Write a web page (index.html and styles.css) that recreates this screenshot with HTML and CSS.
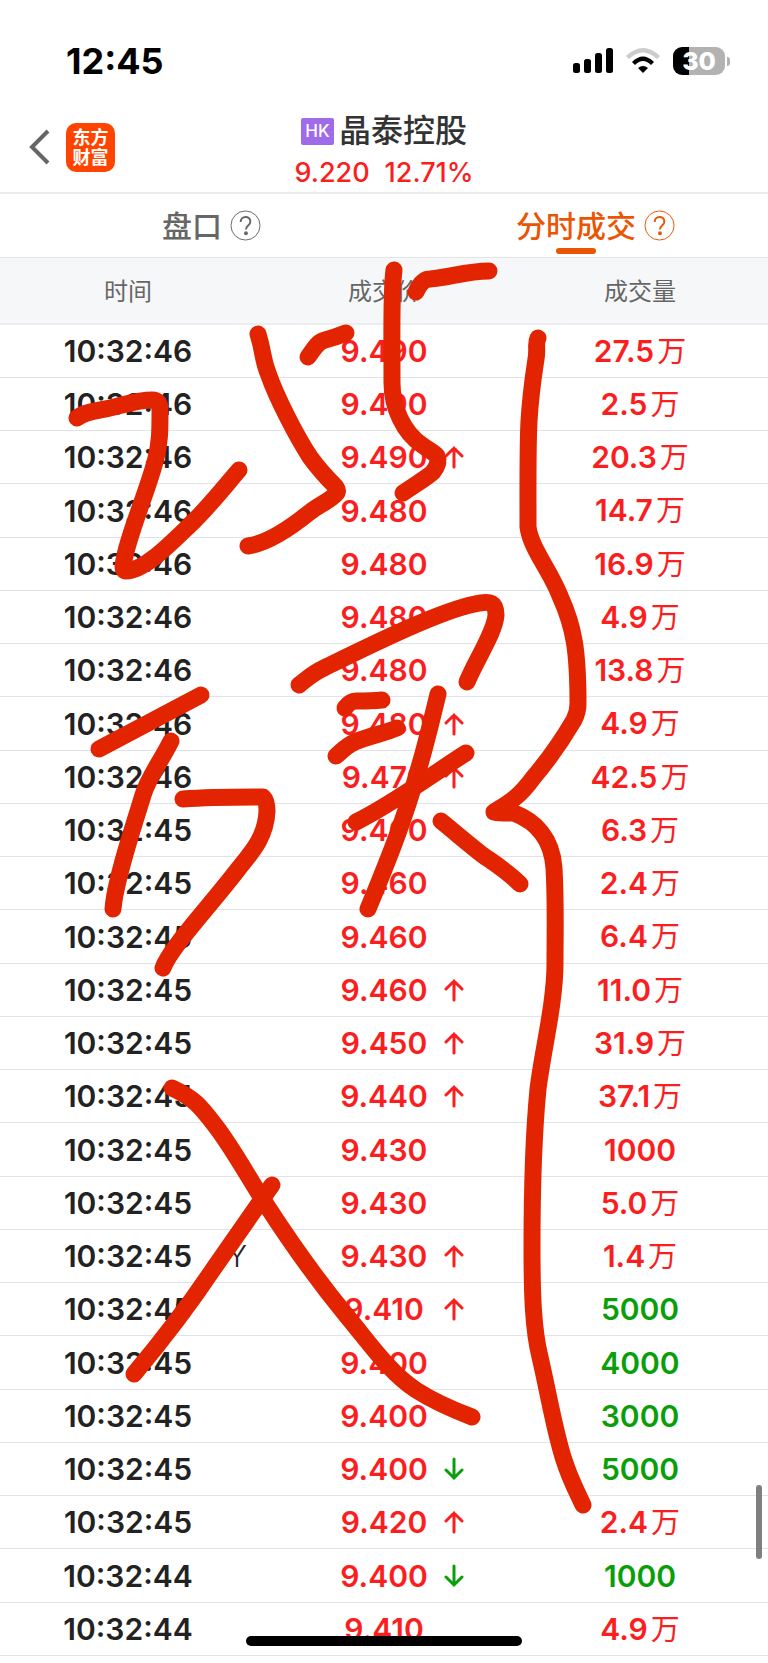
FILE: index.html
```html
<!DOCTYPE html>
<html lang="zh-CN">
  <head>
    <meta charset="utf-8">
    <meta name="viewport" content="width=device-width, initial-scale=1">
    <title>晶泰控股 分时成交</title>
    <link rel="stylesheet" href="styles.css">
  </head>
  <body>
    <svg class="defs" aria-hidden="true">
      <symbol id="up" viewBox="0 0 20 24">
        <path d="M10 22V3M2 11l8-8 8 8"/>
      </symbol>
      <symbol id="down" viewBox="0 0 20 24">
        <path d="M10 2v19M2 13l8 8 8-8"/>
      </symbol>
    </svg>

    <div class="status">
      <span class="clock">12:45</span>
      <div class="indicators">
        <svg width="40" height="26" viewBox="0 0 40 26">
          <rect x="0" y="15" width="7" height="10" rx="2.500"/>
          <rect x="11" y="11" width="7" height="14" rx="2.500"/>
          <rect x="22" y="5" width="7" height="20" rx="2.500"/>
          <rect x="33" y="0" width="7" height="25" rx="2.500"/>
        </svg>
        <svg width="34" height="26" viewBox="0 0 34 26">
          <path d="M0 8Q17-8 34 8L31 11Q17-2 3 11Z" fill="#ccc"/>
          <path d="M6 14Q17 3 28 14L25 17Q17 9 9 17Z"/>
          <path d="M12 20Q17 16 22 20L17 25Z"/>
        </svg>
        <div class="battery"><span>30</span></div>
      </div>
    </div>

    <header class="nav">
      <div class="nav-left">
        <a class="back" href="#" aria-label="返回">
          <svg width="22" height="38" viewBox="0 0 22 38"><path d="M19 3L3 19l16 16"/></svg>
        </a>
        <a class="logo" href="#">东方<br>财富</a>
      </div>
      <div class="stock">
        <h1><span class="market">HK</span>晶泰控股</h1>
        <p class="quote"><span>9.220</span><span>12.71%</span></p>
      </div>
    </header>

    <nav class="tabs">
      <a class="tab" href="#">
        <span class="tab-name">盘口</span>
        <svg class="help" viewBox="0 0 32 32"><circle cx="16" cy="16" r="15"/><path d="M11 12.500c0-7 10-7 10-.5 0 4-4.500 4-4.500 8"/><circle class="dot" cx="16.500" cy="24" r="2"/></svg>
      </a>
      <a class="tab active" href="#">
        <span class="tab-name">分时成交</span>
        <svg class="help" viewBox="0 0 32 32"><circle cx="16" cy="16" r="15"/><path d="M11 12.500c0-7 10-7 10-.5 0 4-4.500 4-4.500 8"/><circle class="dot" cx="16.500" cy="24" r="2"/></svg>
      </a>
    </nav>

    <table class="ticks">
      <thead>
        <tr><th>时间</th><th>成交价</th><th>成交量</th></tr>
      </thead>
      <tbody>
        <tr><td>10:32:46</td><td class="rise">9.490</td><td class="rise">27.5<i>万</i></td></tr>
        <tr><td>10:32:46</td><td class="rise">9.490</td><td class="rise">2.5<i>万</i></td></tr>
        <tr><td>10:32:46</td><td class="rise"><div class="cell"><span>9.490</span><svg class="arrow"><use href="#up"/></svg></div></td><td class="rise">20.3<i>万</i></td></tr>
        <tr><td>10:32:46</td><td class="rise">9.480</td><td class="rise">14.7<i>万</i></td></tr>
        <tr><td>10:32:46</td><td class="rise">9.480</td><td class="rise">16.9<i>万</i></td></tr>
        <tr><td>10:32:46</td><td class="rise">9.480</td><td class="rise">4.9<i>万</i></td></tr>
        <tr><td>10:32:46</td><td class="rise">9.480</td><td class="rise">13.8<i>万</i></td></tr>
        <tr><td>10:32:46</td><td class="rise"><div class="cell"><span>9.480</span><svg class="arrow"><use href="#up"/></svg></div></td><td class="rise">4.9<i>万</i></td></tr>
        <tr><td>10:32:46</td><td class="rise"><div class="cell"><span>9.470</span><svg class="arrow"><use href="#up"/></svg></div></td><td class="rise">42.5<i>万</i></td></tr>
        <tr><td>10:32:45</td><td class="rise">9.460</td><td class="rise">6.3<i>万</i></td></tr>
        <tr><td>10:32:45</td><td class="rise">9.460</td><td class="rise">2.4<i>万</i></td></tr>
        <tr><td>10:32:45</td><td class="rise">9.460</td><td class="rise">6.4<i>万</i></td></tr>
        <tr><td>10:32:45</td><td class="rise"><div class="cell"><span>9.460</span><svg class="arrow"><use href="#up"/></svg></div></td><td class="rise">11.0<i>万</i></td></tr>
        <tr><td>10:32:45</td><td class="rise"><div class="cell"><span>9.450</span><svg class="arrow"><use href="#up"/></svg></div></td><td class="rise">31.9<i>万</i></td></tr>
        <tr><td>10:32:45</td><td class="rise"><div class="cell"><span>9.440</span><svg class="arrow"><use href="#up"/></svg></div></td><td class="rise">37.1<i>万</i></td></tr>
        <tr><td>10:32:45</td><td class="rise">9.430</td><td class="rise">1000</td></tr>
        <tr><td>10:32:45</td><td class="rise">9.430</td><td class="rise">5.0<i>万</i></td></tr>
        <tr><td><div class="cell wide"><span>10:32:45</span><span class="mark">Y</span></div></td><td class="rise"><div class="cell"><span>9.430</span><svg class="arrow"><use href="#up"/></svg></div></td><td class="rise">1.4<i>万</i></td></tr>
        <tr><td>10:32:45</td><td class="rise"><div class="cell"><span>9.410</span><svg class="arrow"><use href="#up"/></svg></div></td><td class="fall">5000</td></tr>
        <tr><td>10:32:45</td><td class="rise">9.400</td><td class="fall">4000</td></tr>
        <tr><td>10:32:45</td><td class="rise">9.400</td><td class="fall">3000</td></tr>
        <tr><td>10:32:45</td><td class="rise"><div class="cell"><span>9.400</span><svg class="arrow fall"><use href="#down"/></svg></div></td><td class="fall">5000</td></tr>
        <tr><td>10:32:45</td><td class="rise"><div class="cell"><span>9.420</span><svg class="arrow"><use href="#up"/></svg></div></td><td class="rise">2.4<i>万</i></td></tr>
        <tr><td>10:32:44</td><td class="rise"><div class="cell"><span>9.400</span><svg class="arrow fall"><use href="#down"/></svg></div></td><td class="fall">1000</td></tr>
        <tr><td>10:32:44</td><td class="rise">9.410</td><td class="rise">4.9<i>万</i></td></tr>
      </tbody>
    </table>

    <div class="scrollbar"></div>
    <div class="home"></div>

    <!-- pen notes drawn over the list -->
    <svg class="pen" viewBox="0 0 768 1663" aria-hidden="true">
      <path d="M77 418C84 412 97 411 110 408C128 404 137 400 152 400Q160 400 160 409C160 431 160 442 156 458C149 488 125 542 123 567Q123 571 126 571C145 571 173 541 194 521C211 504 226 485 239 470"/>
      <path d="M258 334C264 353 262 358 268 373C277 399 297 437 310 457C320 471 329 480 336 487Q339 491 336 494C329 501 321 504 310 512C294 525 270 543 248 546"/>
      <path d="M308 357C314 349 317 342 325 340Q336 337 346 333"/>
      <path d="M394 270C391 292 392 320 392 383C392 408 404 433 422 445C430 451 434 452 437 456Q440 463 433 472C428 477 416 484 403 493"/>
      <path d="M416 292Q422 279 430 279C448 278 466 271 489 271"/>
      <path d="M99 749L201 695"/>
      <path d="M171 741C160 763 148 778 143 795C135 822 115 880 113 909"/>
      <path d="M183 799C210 797 236 797 263 797Q267 801 267 811C266 836 253 851 239 868C210 906 170 948 163 968"/>
      <path d="M299 685C309 677 313 673 324 668C367 647 439 611 475 604C491 600 496 603 496 615C495 632 477 658 467 682"/>
      <path d="M345 708Q350 701 356 701Q372 701 382 700"/>
      <path d="M336 756C342 751 347 745 355 742C369 736 385 733 397 728"/>
      <path d="M438 694C432 719 425 748 418 771C404 822 384 870 368 909"/>
      <path d="M466 753C430 776 391 805 356 822"/>
      <path d="M441 821C457 834 472 847 484 856C497 865 508 872 520 884"/>
      <path d="M538 338C535 344 538 348 536 359C527 417 528 433 528 527C531 549 550 570 560 596C574 627 578 650 578 704Q578 712 574 720C564 737 550 758 533 778C518 799 505 805 494 812Q494 813 514 813C535 821 552 838 554 868C556 902 555 932 555 963C555 1003 543 1049 538 1089C534 1130 532 1190 532 1247C532 1293 533 1329 540 1357C549 1396 555 1433 564 1460C570 1479 577 1492 583 1505"/>
      <path d="M172 1088C194 1098 201 1107 214 1124C233 1148 249 1179 267 1206C291 1243 318 1281 346 1315C371 1345 390 1373 416 1390C433 1401 451 1409 472 1417"/>
      <path d="M272 1185C253 1212 234 1239 214 1268C190 1304 160 1343 134 1374"/>
    </svg>
  </body>
</html>
```

FILE: styles.css
```css
* { box-sizing: border-box; }
body {
  position: relative;
  margin: 0;
  min-height: 100vh;
  background: #fff;
  color: #222;
  font-family: Inter, "Noto Sans CJK SC", sans-serif;
  overflow-x: hidden;
}
a { color: inherit; text-decoration: none; }
.defs { display: none; }

.status {
  display: flex;
  justify-content: space-between;
  align-items: center;
  height: 108px;
  padding: 14px 38px 0 66px;
  color: #000;
}
.clock { font-size: 36px; font-weight: 700; }
.indicators { display: flex; align-items: center; gap: 13px; }
.battery {
  position: relative;
  width: 52px;
  height: 28px;
  margin-right: 5px;
  border-radius: 9px;
  background: linear-gradient(90deg, #000 16px, #b2b2b2 16px);
  color: #fff;
  font-size: 25px;
  font-weight: 800;
  line-height: 28px;
  text-align: center;
}
.battery::after {
  content: "";
  position: absolute;
  top: 10px;
  right: -5px;
  width: 3px;
  height: 9px;
  border-radius: 0 4px 4px 0;
  background: #b2b2b2;
}

.nav {
  display: grid;
  grid-template-columns: 1fr auto 1fr;
  align-items: center;
  height: 86px;
  border-bottom: 2px solid #ebebeb;
}
.nav-left {
  display: flex;
  align-items: center;
  gap: 15px;
  padding: 0 0 6px 29px;
}
.back svg { display: block; fill: none; stroke: #666; stroke-width: 4; }
.logo {
  width: 49px;
  height: 49px;
  padding-top: 5px;
  border-radius: 10px;
  background: #ff4400;
  color: #fff;
  font-size: 18px;
  font-weight: 700;
  line-height: 20px;
  text-align: center;
}
.stock { text-align: center; }
.stock h1 {
  display: flex;
  align-items: center;
  justify-content: center;
  gap: 5px;
  margin: 0;
  color: #333;
  font-size: 32px;
  font-weight: 500;
  line-height: 46px;
}
.market {
  width: 33px;
  border-radius: 2px;
  background: #9f6be8;
  color: #fff;
  font-size: 17px;
  line-height: 27px;
}
.quote {
  display: flex;
  justify-content: center;
  gap: 15px;
  margin: 0;
  color: #fa1e1e;
  font-size: 27px;
  font-weight: 500;
  line-height: 38px;
}

.tabs {
  display: grid;
  grid-template-columns: 1fr 1fr;
  height: 64px;
  border-bottom: 1px solid #e2e4e8;
}
.tab {
  display: grid;
  grid-template-columns: 1fr auto 1fr;
  align-items: center;
  gap: 8px;
  color: #666;
  font-size: 30px;
  font-weight: 500;
}
.tab-name { position: relative; grid-column: 2; line-height: 62px; }
.help { width: 31px; height: 31px; fill: none; stroke: currentColor; stroke-width: 1; }
.help path { stroke-width: 2; }
.help .dot { fill: currentColor; stroke: none; }
.active { color: #ea5504; }
.active .tab-name::after {
  content: "";
  position: absolute;
  left: 50%;
  bottom: 3px;
  width: 40px;
  height: 6px;
  margin-left: -20px;
  border-radius: 3px;
  background: #ea5504;
}

.ticks {
  width: 100%;
  border-collapse: separate;
  border-spacing: 0;
  table-layout: fixed;
}
.ticks th {
  height: 67px;
  padding: 0 0 2px;
  border-bottom: 2px solid #ebedf0;
  background: #f6f7f9;
  color: #666;
  font-size: 24px;
  font-weight: 400;
}
.ticks td {
  height: 53px;
  padding: 0;
  border-bottom: 1px solid #e2e3e8;
  font-size: 30px;
  font-weight: 600;
  line-height: 40px;
  text-align: center;
}
.ticks tr:nth-child(4n) td { height: 54px; }
.ticks i { margin-left: 3px; font-size: 29px; font-style: normal; font-weight: 400; }
.ticks .rise { color: #fa1e1e; }
.ticks .fall { color: #0a9f0a; }
.cell {
  display: grid;
  grid-template-columns: 1fr 120px 1fr;
  align-items: center;
}
.cell > :first-child { grid-column: 2; }
.cell.wide { grid-template-columns: 1fr 198px 1fr; }
.mark { font-weight: 300; text-align: left; }
.arrow {
  width: 20px;
  height: 24px;
  fill: none;
  stroke: currentColor;
  stroke-width: 3;
  stroke-linecap: round;
}

.scrollbar {
  position: absolute;
  right: 6px;
  bottom: 104px;
  width: 6px;
  height: 74px;
  border-radius: 3px;
  background: #7f7f7f;
}
.home {
  position: absolute;
  left: 32%;
  right: 32%;
  bottom: 17px;
  height: 10px;
  border-radius: 5px;
  background: #000;
}
.pen {
  position: absolute;
  top: 0;
  left: 0;
  width: 100%;
  fill: none;
  stroke: #e22400;
  stroke-width: 17;
  stroke-linecap: round;
  stroke-linejoin: round;
  pointer-events: none;
}
```
